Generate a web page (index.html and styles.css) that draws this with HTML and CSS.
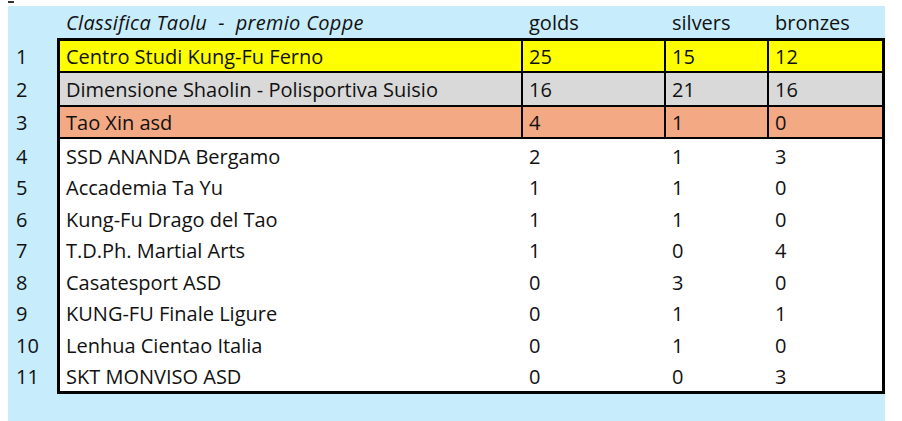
FILE: index.html
```html
<!DOCTYPE html>
<html lang="it">
<head>
<meta charset="utf-8">
<title>Classifica Taolu - premio Coppe</title>
<link rel="stylesheet" href="styles.css">
</head>
<body>
<div class="mark"></div>
<div class="panel">
  <div class="ranks">
    <div class="rk r1">1</div>
    <div class="rk r2">2</div>
    <div class="rk r3">3</div>
    <div class="rk">4</div>
    <div class="rk">5</div>
    <div class="rk">6</div>
    <div class="rk">7</div>
    <div class="rk">8</div>
    <div class="rk">9</div>
    <div class="rk">10</div>
    <div class="rk">11</div>
  </div>
  <div class="main">
    <div class="head">
      <div class="c title">Classifica Taolu  -  premio Coppe</div>
      <div class="c">golds</div>
      <div class="c">silvers</div>
      <div class="c">bronzes</div>
    </div>
    <div class="board">
      <div class="top">
        <div class="c gold">Centro Studi Kung-Fu Ferno</div>
        <div class="c gold">25</div>
        <div class="c gold">15</div>
        <div class="c gold">12</div>
        <div class="c silver">Dimensione Shaolin - Polisportiva Suisio</div>
        <div class="c silver">16</div>
        <div class="c silver">21</div>
        <div class="c silver">16</div>
        <div class="c bronze">Tao Xin asd</div>
        <div class="c bronze">4</div>
        <div class="c bronze">1</div>
        <div class="c bronze">0</div>
      </div>
      <div class="rest">
        <div class="c">SSD ANANDA Bergamo</div><div class="c">2</div><div class="c">1</div><div class="c">3</div>
        <div class="c">Accademia Ta Yu</div><div class="c">1</div><div class="c">1</div><div class="c">0</div>
        <div class="c">Kung-Fu Drago del Tao</div><div class="c">1</div><div class="c">1</div><div class="c">0</div>
        <div class="c">T.D.Ph. Martial Arts</div><div class="c">1</div><div class="c">0</div><div class="c">4</div>
        <div class="c">Casatesport ASD</div><div class="c">0</div><div class="c">3</div><div class="c">0</div>
        <div class="c">KUNG-FU Finale Ligure</div><div class="c">0</div><div class="c">1</div><div class="c">1</div>
        <div class="c">Lenhua Cientao Italia</div><div class="c">0</div><div class="c">1</div><div class="c">0</div>
        <div class="c">SKT MONVISO ASD</div><div class="c">0</div><div class="c">0</div><div class="c">3</div>
      </div>
    </div>
  </div>
</div>
</body>
</html>
```
FILE: styles.css
```css
html, body {
  margin: 0;
  padding: 0;
  background: #ffffff;
}
body {
  font-family: "Open Sans", "Noto Sans", sans-serif;
  font-size: 20px;
  color: #111;
  width: 902px;
  height: 421px;
  overflow: hidden;
}
.mark {
  width: 6px;
  height: 2px;
  background: #333;
  margin: 1px 0 3px 8px;
}
.panel {
  margin-left: 8px;
  width: 877px;
  height: 415px;
  background: #c7ecfb;
  display: flex;
}
.ranks {
  width: 49px;
  padding-top: 35px;
  display: flex;
  flex-direction: column;
}
.rk {
  height: 31.5px;
  padding-left: 8px;
  padding-top: 3px;
  box-sizing: border-box;
  display: flex;
  align-items: center;
}
.rk.r1, .rk.r3 {
  height: 30px;
  padding-top: 0;
  margin-bottom: 2px;
}
.rk.r2 {
  height: 32px;
  padding-top: 0;
  margin-bottom: 2px;
}
.main {
  width: 828px;
  display: flex;
  flex-direction: column;
}
.head, .top, .rest {
  display: grid;
  grid-template-columns: 461px 141px 101px 113px;
  column-gap: 2px;
}
.head {
  height: 32px;
  padding-left: 3px;
}
.c {
  padding-left: 6px;
  display: flex;
  align-items: center;
  white-space: pre;
}
.title {
  font-style: italic;
  letter-spacing: 0.3px;
}
.board {
  border: 3px solid #000;
  background: #fff;
}
.top {
  grid-template-rows: 30px 32px 30px;
  row-gap: 2px;
  background: #000;
  border-bottom: 2px solid #000;
}
.rest {
  grid-auto-rows: 31.5px;
}
.rest .c {
  padding-top: 3px;
  box-sizing: border-box;
}
.gold { background: #ffff00; }
.silver { background: #d9d9d9; }
.bronze { background: #f2a984; }
```
